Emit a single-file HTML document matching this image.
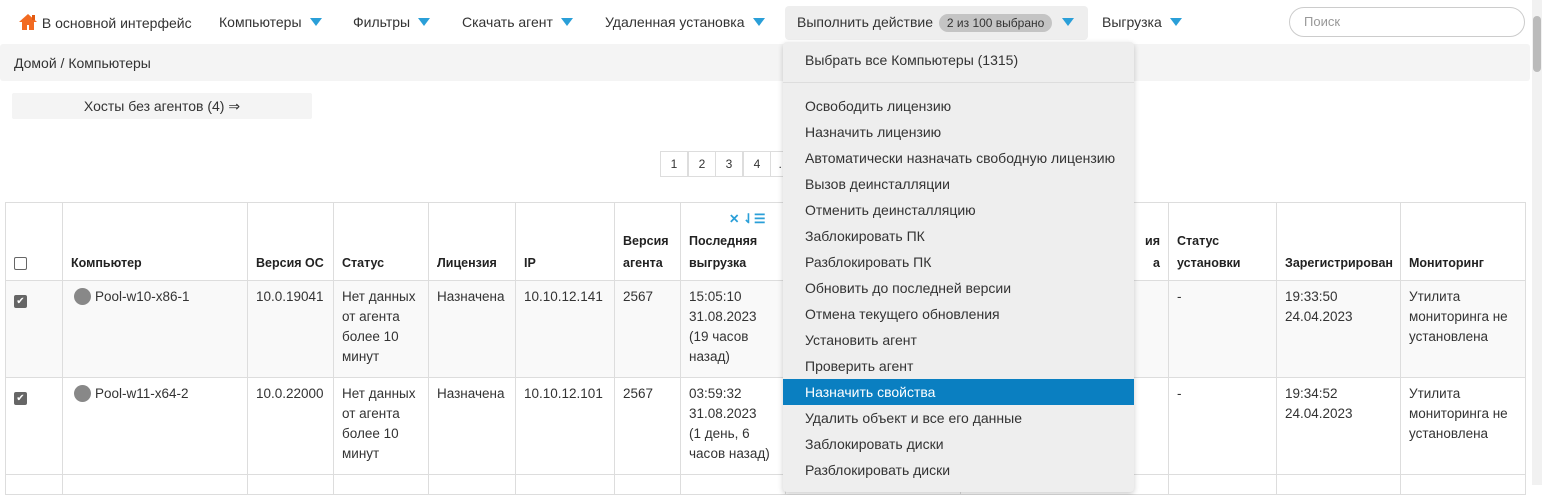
<!DOCTYPE html>
<html><head><meta charset="utf-8"><style>
*{box-sizing:border-box;margin:0;padding:0}
body{width:1542px;height:485px;overflow:hidden;background:#fff;font-family:"Liberation Sans",Arial,sans-serif;font-size:14px;color:#333;position:relative}
.a{position:absolute;white-space:nowrap}
.tri{display:inline-block;width:0;height:0;border-left:6px solid transparent;border-right:6px solid transparent;border-top:8px solid #2a9fd8;margin-left:8px;vertical-align:1px}
table{position:absolute;left:5px;top:202px;border-collapse:collapse;width:1520px;table-layout:fixed}
td,th{border:1px solid #ddd;padding:6px 8px;vertical-align:top;text-align:left;line-height:20px;font-size:13.5px}
th{font-weight:bold;font-size:12.5px;vertical-align:bottom;color:#222;padding-bottom:6px;line-height:22px}
.cb{display:inline-block;width:13px;height:13px;border:1px solid #666;border-radius:2px;vertical-align:middle}
.cbc{background:#666;color:#fff;font-size:10px;line-height:12px;text-align:center;border-color:#666}
.dot{display:inline-block;width:17px;height:17px;border-radius:50%;background:#888;vertical-align:-4px;margin-right:4px;margin-left:3px}
.menu{position:absolute;left:783px;top:42px;width:351px;height:450px;background:#eee;box-shadow:0 2px 6px rgba(0,0,0,.2);border-radius:4px}
.menu div{height:26px;line-height:26px;padding-left:22px;color:#333}
.pg{position:absolute;top:151px;height:26px;border:1px solid #ddd;font-size:12px;line-height:24px;text-align:center;width:28px;background:#fff}
</style></head><body>
<div class="a" style="left:18px;top:13px;font-size:14px"><svg width="20" height="18" viewBox="0 0 20 18" style="vertical-align:-3px"><path d="M10 1L1 9h3v8h5v-5h2v5h5V9h3z" fill="#f26a21"/><rect x="14" y="2" width="3" height="5" fill="#e25a11"/></svg> В основной интерфейс</div>
<div class="a" style="left:219px;top:14px">Компьютеры<span class="tri"></span></div>
<div class="a" style="left:353px;top:14px">Фильтры<span class="tri"></span></div>
<div class="a" style="left:462px;top:14px">Скачать агент<span class="tri"></span></div>
<div class="a" style="left:605px;top:14px">Удаленная установка<span class="tri"></span></div>
<div class="a" style="left:785px;top:6px;width:303px;height:34px;background:#eee;border-radius:4px"></div>
<div class="a" style="left:797px;top:14px">Выполнить действие <span style="display:inline-block;background:#c4c4c4;border-radius:10px;padding:0 8px;font-size:12px;line-height:18px;margin-left:2px">2 из 100 выбрано</span><span class="tri" style="margin-left:10px"></span></div>
<div class="a" style="left:1102px;top:14px">Выгрузка<span class="tri"></span></div>
<div class="a" style="left:1289px;top:7px;width:236px;height:30px;border:1px solid #ccc;border-radius:15px;padding-left:14px;line-height:28px;color:#999;font-size:13px">Поиск</div>
<div class="a" style="left:1532px;top:0;width:10px;height:485px;background:#f1f1f1"></div>
<div class="a" style="left:1533px;top:16px;width:8px;height:56px;background:#bbb;border-radius:4px"></div>
<div class="a" style="left:0;top:44px;width:1530px;height:37px;background:#f4f4f4;border-radius:3px"></div>
<div class="a" style="left:14px;top:55px">Домой / Компьютеры</div>
<div class="a" style="left:12px;top:93px;width:300px;height:26px;background:#f4f4f4;border-radius:2px;text-align:center;line-height:26px">Хосты без агентов (4) ⇒</div>
<div class="pg" style="left:660px">1</div><div class="pg" style="left:688px">2</div><div class="pg" style="left:715px">3</div><div class="pg" style="left:743px">4</div><div class="pg" style="left:770px">…</div>
<table>
<colgroup><col style="width:57px"><col style="width:185px"><col style="width:86px"><col style="width:95px"><col style="width:87px"><col style="width:99px"><col style="width:66px"><col style="width:105px"><col style="width:175px"><col style="width:208px"><col style="width:108px"><col style="width:124px"><col style="width:125px"></colgroup>
<tr style="height:78px"><th><span class="cb" style="background:#fff"></span></th><th>Компьютер</th><th>Версия ОС</th><th>Статус</th><th>Лицензия</th><th>IP</th><th>Версия агента</th><th style="position:relative"><div style="position:absolute;top:8px;left:48px;color:#2a9fd8;line-height:16px">✕ <span style="font-size:13px">⇃☰</span></div>Последняя выгрузка</th><th></th><th style="text-align:right">ия<br>а</th><th>Статус установки</th><th>Зарегистрирован</th><th>Мониторинг</th></tr>
<tr style="height:97px;background:#f9f9f9"><td style="padding-top:10px"><span class="cb cbc">✔</span></td><td><span class="dot"></span>Pool-w10-x86-1</td><td>10.0.19041</td><td>Нет данных от агента более 10 минут</td><td>Назначена</td><td>10.10.12.141</td><td>2567</td><td>15:05:10 31.08.2023 (19 часов назад)</td><td></td><td></td><td>-</td><td>19:33:50 24.04.2023</td><td>Утилита мониторинга не установлена</td></tr>
<tr style="height:97px"><td style="padding-top:10px"><span class="cb cbc">✔</span></td><td><span class="dot"></span>Pool-w11-x64-2</td><td>10.0.22000</td><td>Нет данных от агента более 10 минут</td><td>Назначена</td><td>10.10.12.101</td><td>2567</td><td>03:59:32<br>31.08.2023<br>(1 день, 6 часов назад)</td><td></td><td></td><td>-</td><td>19:34:52 24.04.2023</td><td>Утилита мониторинга не установлена</td></tr>
<tr style="height:20px"><td></td><td></td><td></td><td></td><td></td><td></td><td></td><td></td><td></td><td></td><td></td><td></td><td></td></tr>
</table>
<div class="menu">
<div style="margin-top:5px">Выбрать все Компьютеры (1315)</div>
<div style="height:1px;background:#ddd;margin:9px 0 10px;padding:0"></div>
<div>Освободить лицензию</div><div>Назначить лицензию</div><div>Автоматически назначать свободную лицензию</div><div>Вызов деинсталляции</div><div>Отменить деинсталляцию</div><div>Заблокировать ПК</div><div>Разблокировать ПК</div><div>Обновить до последней версии</div><div>Отмена текущего обновления</div><div>Установить агент</div><div>Проверить агент</div>
<div style="background:#0a7fc1;color:#fff">Назначить свойства</div>
<div>Удалить объект и все его данные</div><div>Заблокировать диски</div><div>Разблокировать диски</div>
</div>
</body></html>
